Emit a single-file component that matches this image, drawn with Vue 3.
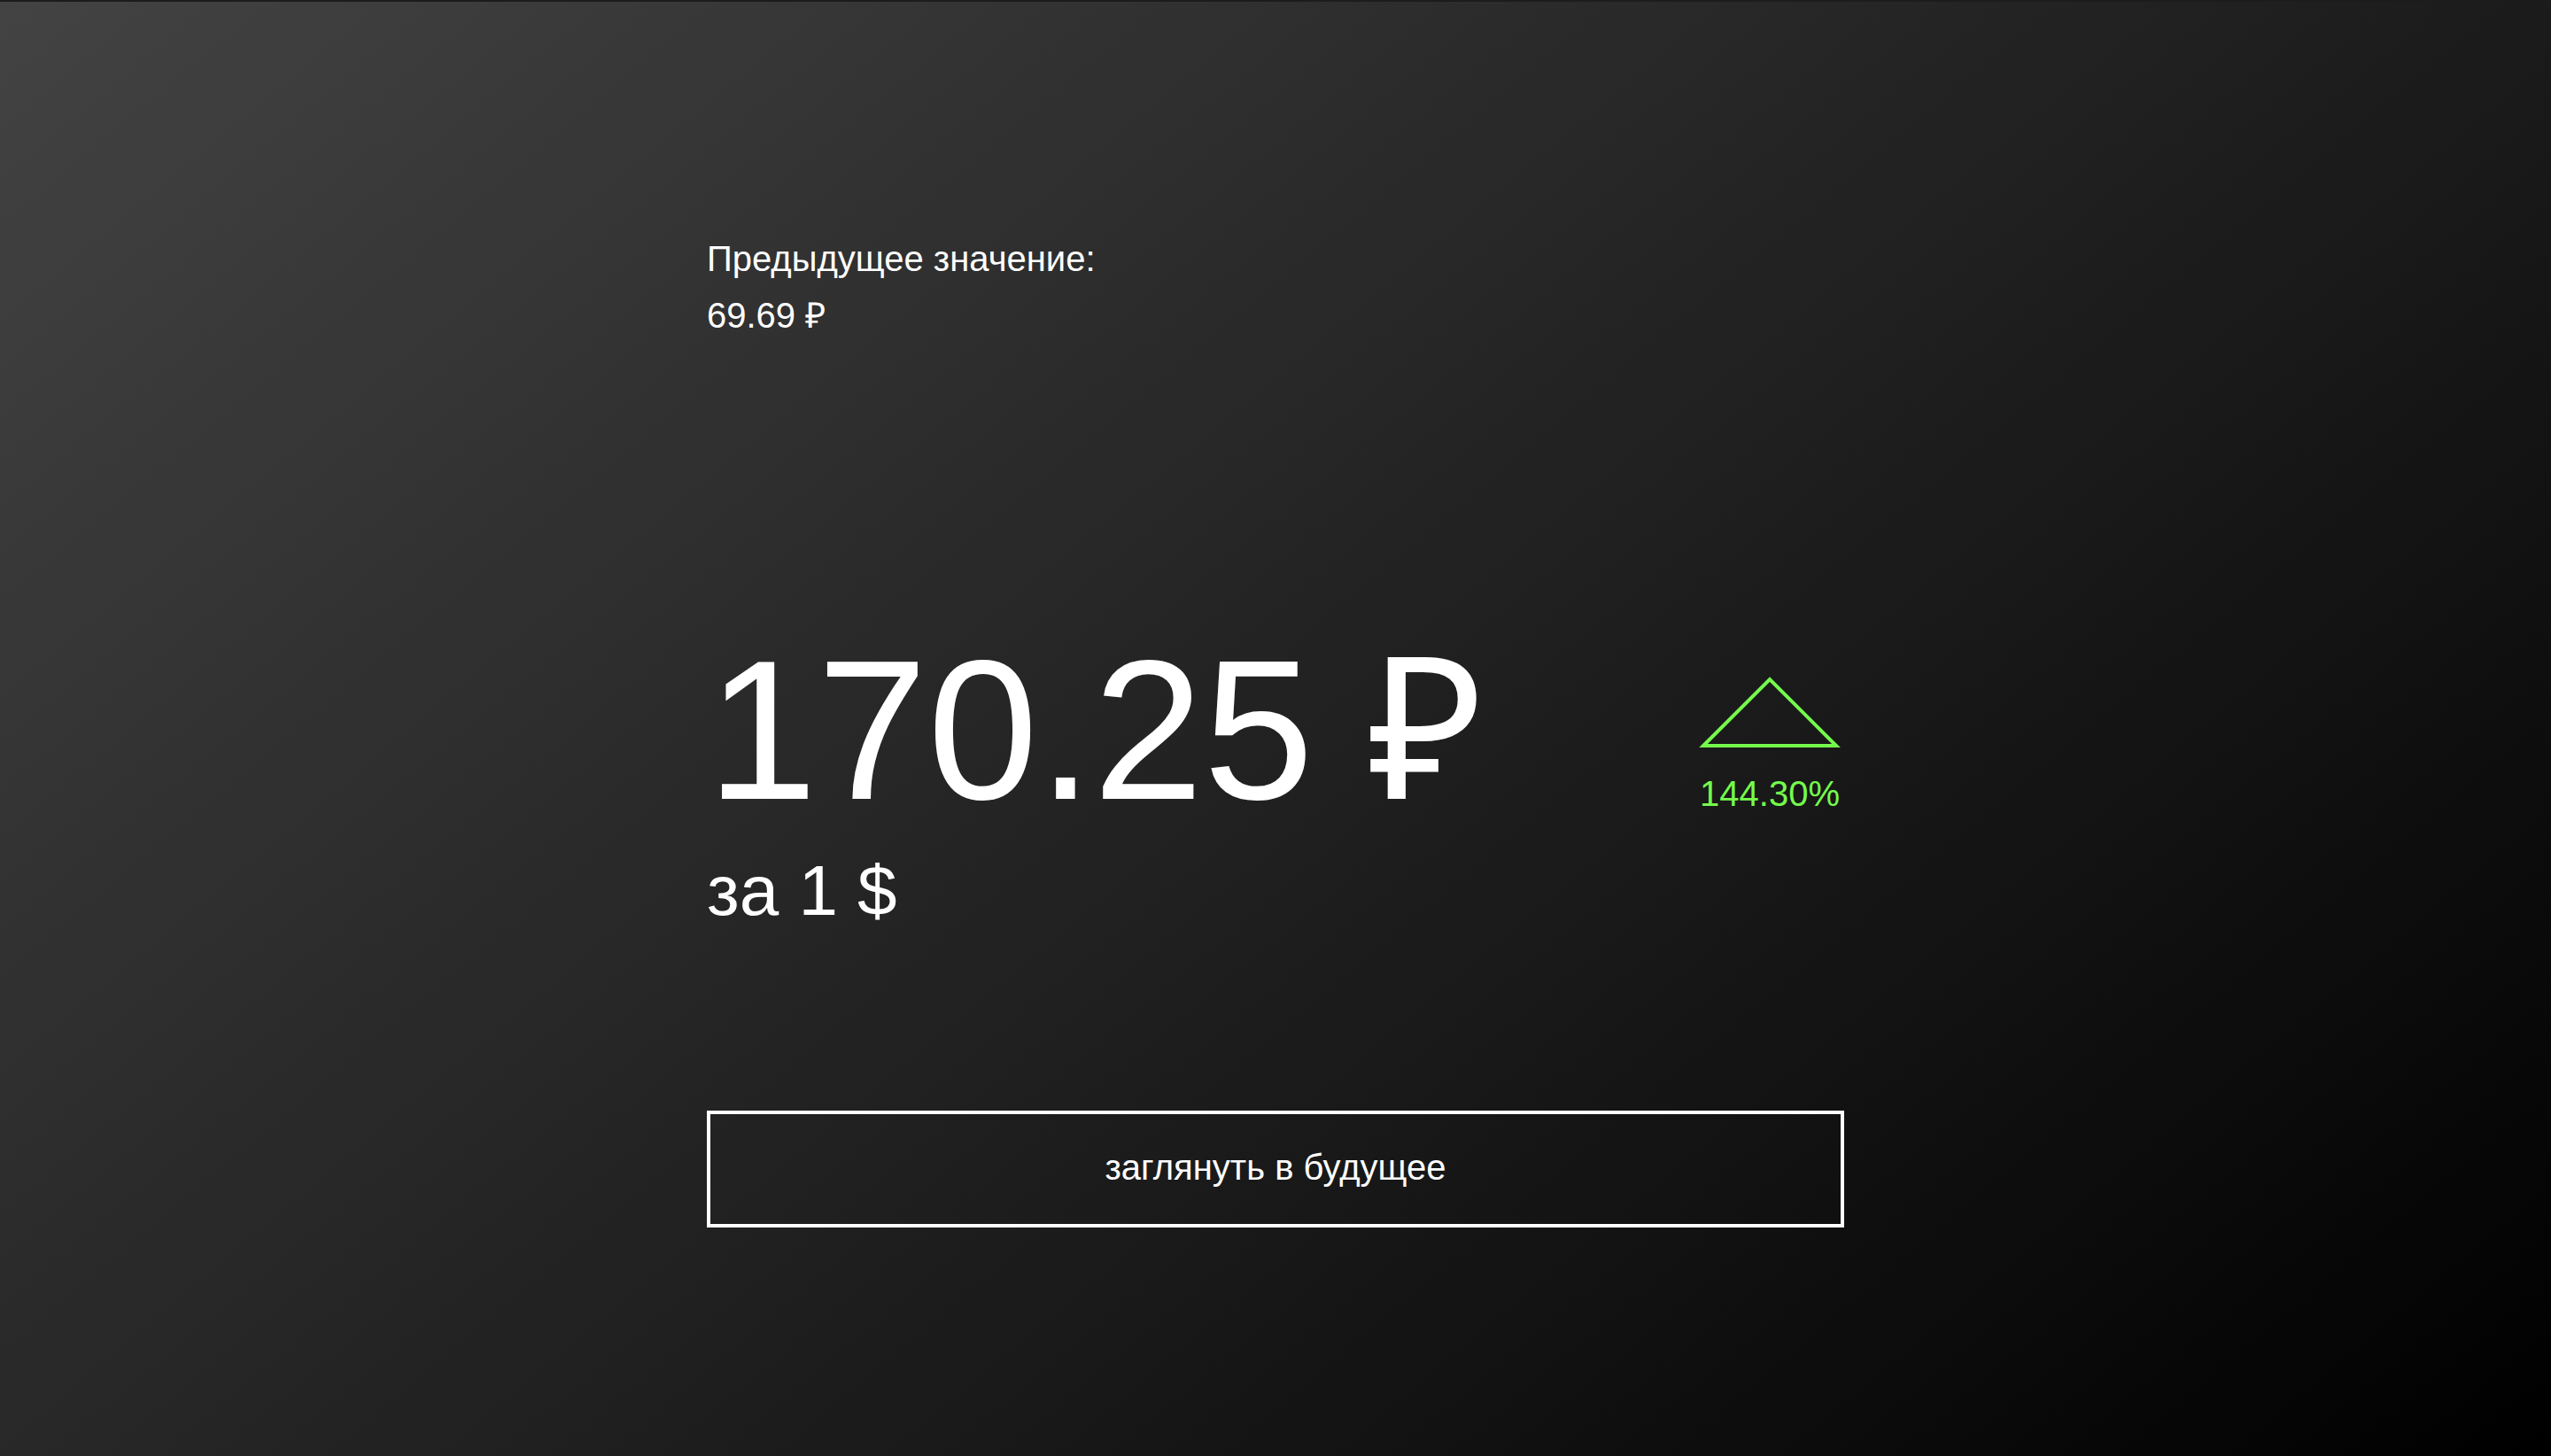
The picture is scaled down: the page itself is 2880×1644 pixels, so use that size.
<script setup>
const previous = '69.69 ₽'
const current = '170.25 ₽'
const change = '144.30%'
</script>

<template>
  <main class="page">
    <section class="card">
      <div class="previous">
        <p>Предыдущее значение:</p>
        <p>{{ previous }}</p>
      </div>
      <div class="rate">
        <div>
          <h1 class="value">{{ current }}</h1>
          <p class="unit">за 1 $</p>
        </div>
        <div class="change">
          <svg class="arrow" viewBox="0 0 160 84" aria-hidden="true">
            <path d="M5 80 80 5 155 80Z" fill="none" stroke="#75fb4c" stroke-width="4" />
          </svg>
          <span>{{ change }}</span>
        </div>
      </div>
      <button class="action" type="button">заглянуть в будущее</button>
    </section>
  </main>
</template>

<style>
body {
  background: #000;
}
</style>

<style scoped>
.page {
  box-sizing: border-box;
  min-height: 100vh;
  padding-top: 258px;
  border-top: 2px solid #1c1c1c;
  background: linear-gradient(140deg, #434343 0%, #000 100%);
  color: #fff;
  font-family: "Liberation Sans", Arial, sans-serif;
  font-size: 40px;
  line-height: 64px;
}
.card {
  width: 1284px;
  max-width: 100%;
  margin: 0 auto;
}
p,
h1 {
  margin: 0;
}
.rate {
  display: flex;
  justify-content: space-between;
  align-items: flex-start;
  margin-top: 316px;
}
.value {
  font-size: 224px;
  line-height: 240px;
  font-weight: 400;
}
.unit {
  margin-top: 14px;
  font-size: 80px;
  line-height: 96px;
}
.change {
  display: flex;
  flex-direction: column;
  align-items: center;
  gap: 18px;
  margin-top: 58px;
  padding-right: 4px;
  color: #75fb4c;
}
.arrow {
  width: 160px;
  height: 84px;
}
.action {
  display: block;
  width: 100%;
  height: 132px;
  margin-top: 200px;
  padding: 0 0 4px;
  border: 4px solid #fff;
  border-radius: 0;
  background: transparent;
  color: inherit;
  font: inherit;
  cursor: pointer;
}
</style>
